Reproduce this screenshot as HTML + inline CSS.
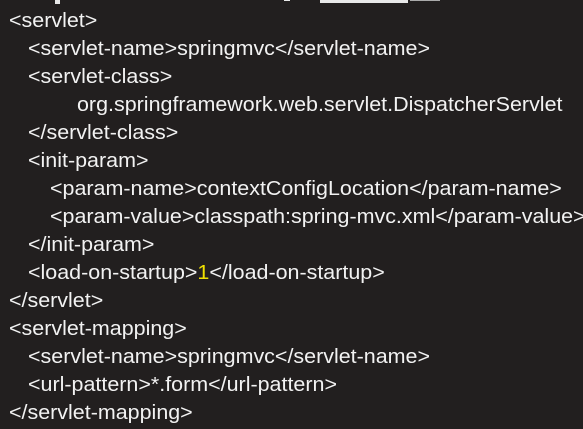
<!DOCTYPE html>
<html><head><meta charset="utf-8"><style>
html,body{margin:0;padding:0;background:#221f1f;width:583px;height:429px;overflow:hidden;position:relative}
.l{position:absolute;color:#f2f2f2;font-family:"Liberation Sans",sans-serif;font-size:20px;line-height:28px;white-space:pre;transform-origin:0 50%}
.y{color:#f0e000}
.bar{position:absolute;background:#e8e8e8}
</style></head><body>
<div class="bar" style="left:55px;top:0;width:5px;height:4px"></div>
<div class="bar" style="left:284px;top:0;width:6px;height:1px"></div>
<div class="bar" style="left:320px;top:0;width:88px;height:3px"></div>
<div class="bar" style="left:410px;top:0;width:30px;height:1px;background:#aaa"></div>
<div class="l" style="left:9px;top:7px">&lt;servlet&gt;</div>
<div class="l" id="ref" style="left:28px;top:35px">&lt;servlet-name&gt;springmvc&lt;/servlet-name&gt;</div>
<div class="l" style="left:28px;top:63px">&lt;servlet-class&gt;</div>
<div class="l" style="left:77px;top:91px">org.springframework.web.servlet.DispatcherServlet</div>
<div class="l" style="left:28px;top:119px">&lt;/servlet-class&gt;</div>
<div class="l" style="left:28px;top:147px">&lt;init-param&gt;</div>
<div class="l" style="left:50px;top:175px">&lt;param-name&gt;contextConfigLocation&lt;/param-name&gt;</div>
<div class="l" style="left:50px;top:203px">&lt;param-value&gt;classpath:spring-mvc.xml&lt;/param-value&gt;</div>
<div class="l" style="left:28px;top:231px">&lt;/init-param&gt;</div>
<div class="l" style="left:28px;top:259px">&lt;load-on-startup&gt;<span class="y">1</span>&lt;/load-on-startup&gt;</div>
<div class="l" style="left:9px;top:287px">&lt;/servlet&gt;</div>
<div class="l" style="left:9px;top:315px">&lt;servlet-mapping&gt;</div>
<div class="l" style="left:28px;top:343px">&lt;servlet-name&gt;springmvc&lt;/servlet-name&gt;</div>
<div class="l" style="left:28px;top:371px">&lt;url-pattern&gt;*.form&lt;/url-pattern&gt;</div>
<div class="l" style="left:9px;top:399px">&lt;/servlet-mapping&gt;</div>
<script>
var r=document.getElementById('ref');var s=402/r.getBoundingClientRect().width;
document.querySelectorAll('.l').forEach(function(e){e.style.transform='scaleX('+s+')';});
</script>
</body></html>
